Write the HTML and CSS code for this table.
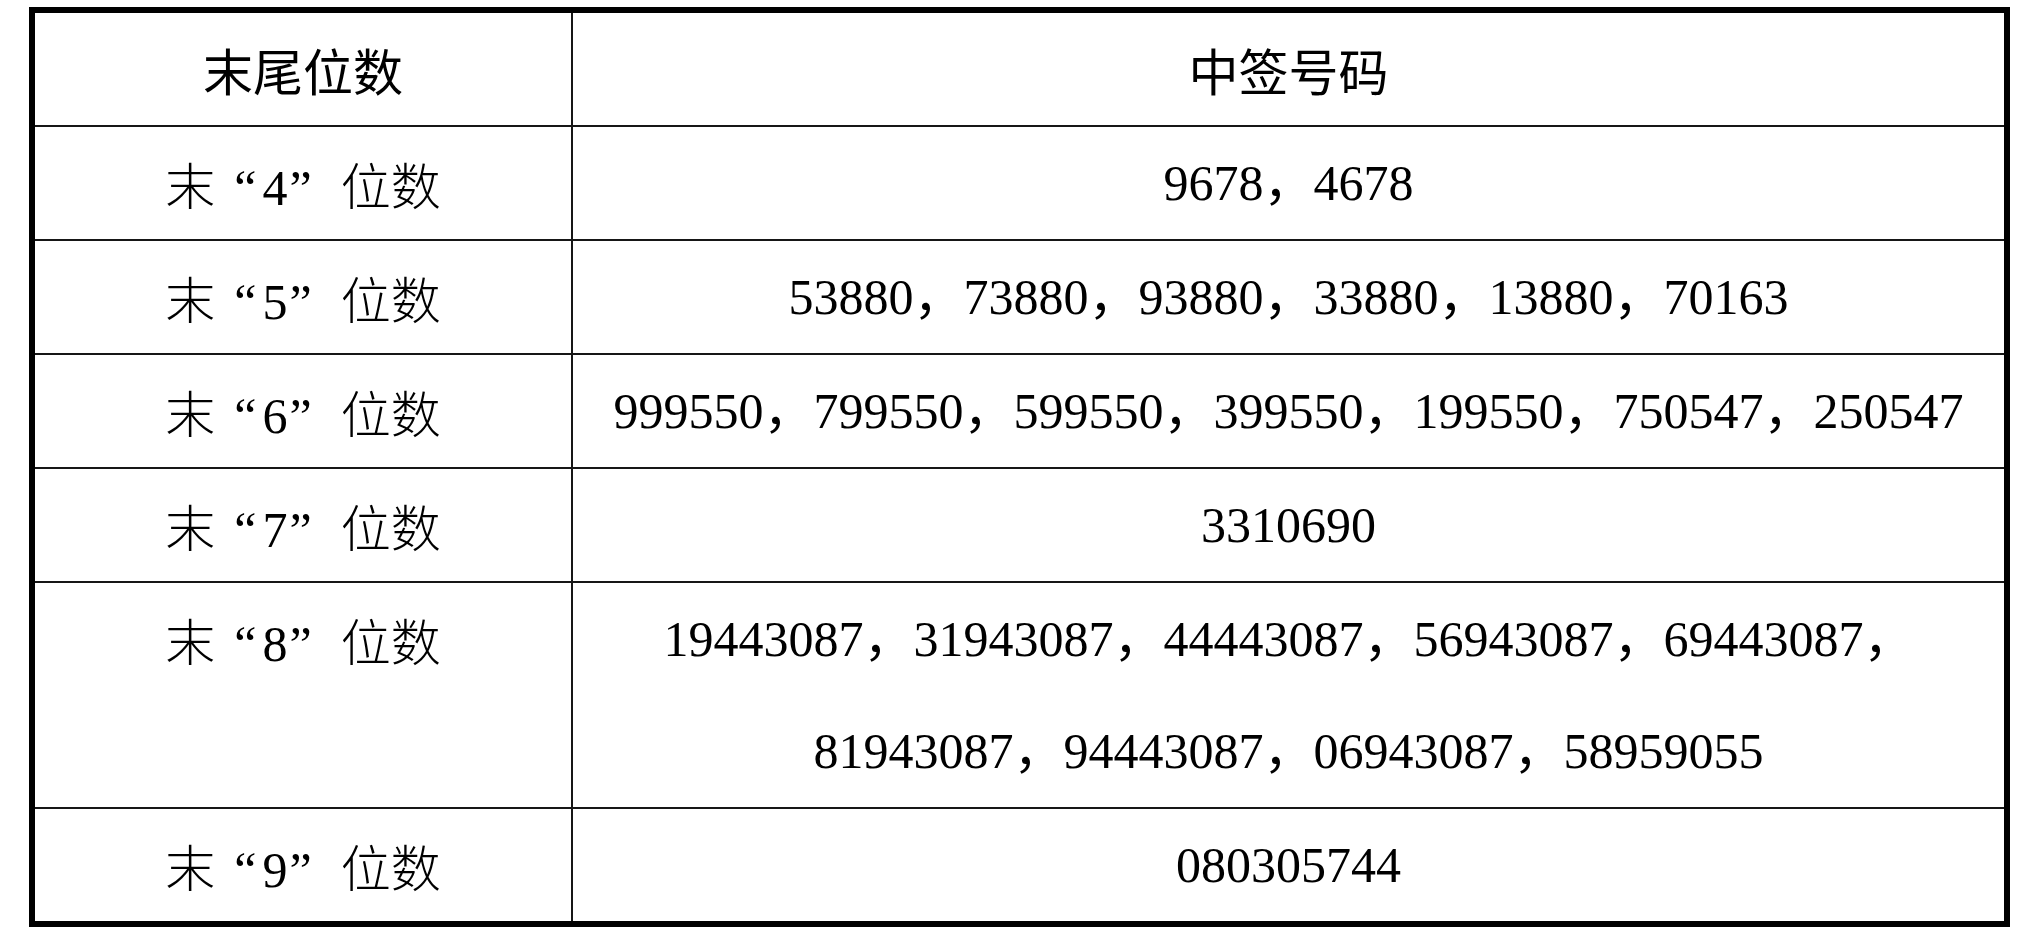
FILE: index.html
```html
<!DOCTYPE html>
<html lang="zh-CN">
<head>
<meta charset="utf-8">
<title>中签号码</title>
<link rel="stylesheet" href="styles.css">
</head>
<body>
<div class="page">
  <div class="grid">
    <div class="cell left head">末尾位数</div>
    <div class="cell right head">中签号码</div>

    <div class="cell left label">末<span class="ql">“</span><span class="n">4</span><span class="qr">”</span>位数</div>
    <div class="cell right num">9678，4678</div>

    <div class="cell left label">末<span class="ql">“</span><span class="n">5</span><span class="qr">”</span>位数</div>
    <div class="cell right num">53880，73880，93880，33880，13880，70163</div>

    <div class="cell left label">末<span class="ql">“</span><span class="n">6</span><span class="qr">”</span>位数</div>
    <div class="cell right num">999550，799550，599550，399550，199550，750547，250547</div>

    <div class="cell left label">末<span class="ql">“</span><span class="n">7</span><span class="qr">”</span>位数</div>
    <div class="cell right num">3310690</div>

    <div class="cell left label">末<span class="ql">“</span><span class="n">8</span><span class="qr">”</span>位数</div>
    <div class="cell right num">19443087，31943087，44443087，56943087，69443087，81943087，94443087，06943087，58959055</div>

    <div class="cell left label last">末<span class="ql">“</span><span class="n">9</span><span class="qr">”</span>位数</div>
    <div class="cell right num last">080305744</div>
  </div>
</div>
</body>
</html>
```

FILE: styles.css
```css
html, body {
  margin: 0;
  padding: 0;
  background: #ffffff;
}

.page {
  padding: 7px 0 0 29px;
}

.grid {
  display: grid;
  grid-template-columns: 538px 1431px;
  width: 1969px;
  border: 6px solid #000000;
  background: #ffffff;
}

.cell {
  box-sizing: border-box;
  border-bottom: 2px solid #161616;
  line-height: 112px;
  font-size: 50px;
  color: #000000;
  text-align: center;
  white-space: normal;
}

.cell.last {
  border-bottom: none;
}

.left {
  border-right: 2px solid #161616;
}

.right {
  padding: 0 10px;
}

.head {
  font-family: "Noto Sans CJK SC", sans-serif;
  font-weight: 400;
}

.label {
  font-family: "Noto Sans CJK SC", sans-serif;
  font-weight: 300;
}

.label .n,
.label .ql,
.label .qr {
  font-family: "Liberation Serif", serif;
  font-weight: 400;
  line-height: 0;
}

.label .ql {
  margin-left: 19px;
  margin-right: 6px;
}

.label .qr {
  margin-left: 2px;
  margin-right: 29px;
}

.num {
  font-family: "Liberation Serif", "Noto Sans CJK SC", serif;
}
```
